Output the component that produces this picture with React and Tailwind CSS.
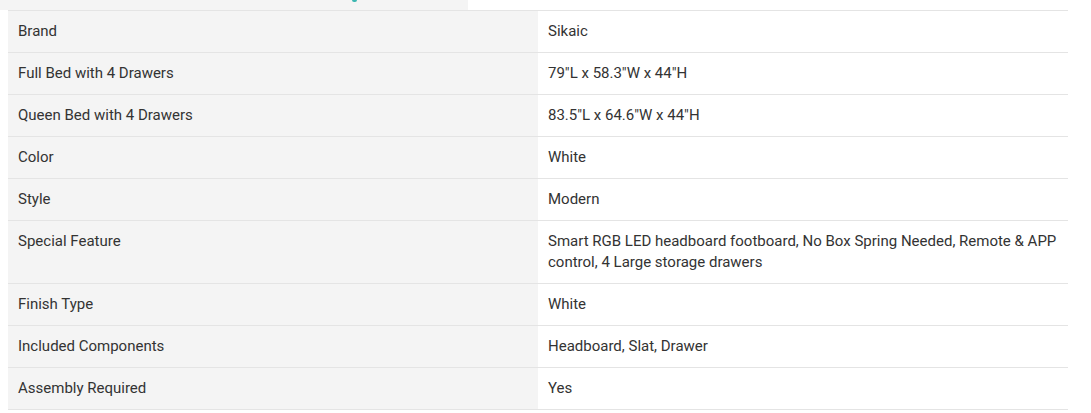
const rows = [
  ['Brand', 'Sikaic'],
  ['Full Bed with 4 Drawers', '79"L x 58.3"W x 44"H'],
  ['Queen Bed with 4 Drawers', '83.5"L x 64.6"W x 44"H'],
  ['Color', 'White'],
  ['Style', 'Modern'],
  ['Special Feature', 'Smart RGB LED headboard footboard, No Box Spring Needed, Remote & APP control, 4 Large storage drawers'],
  ['Finish Type', 'White'],
  ['Included Components', 'Headboard, Slat, Drawer'],
  ['Assembly Required', 'Yes'],
];

export default function App() {
  return (
    <div className="w-[1091px] h-[413px] bg-white overflow-hidden font-['Roboto',sans-serif] text-[15px] text-[#333]">
      {/* cut-off heading strip */}
      <div className="relative w-[468px] h-[10px] bg-[#f4f4f4]">
        <div className="absolute left-[352px] top-0 w-[5px] h-[2px] rounded-b-full bg-[#3cb6b0]" />
      </div>
      <table className="ml-[8px] w-[1060px] border-collapse table-fixed">
        <tbody>
          {rows.map(([label, value]) => (
            <tr key={label} className="border-y border-[#e4e4e4]">
              <td className="w-[530px] bg-[#f4f4f4] px-[10px] py-[10px] leading-[21px] align-top">{label}</td>
              <td className="w-[530px] bg-white px-[10px] py-[10px] leading-[21px] align-top">{value}</td>
            </tr>
          ))}
        </tbody>
      </table>
    </div>
  );
}
